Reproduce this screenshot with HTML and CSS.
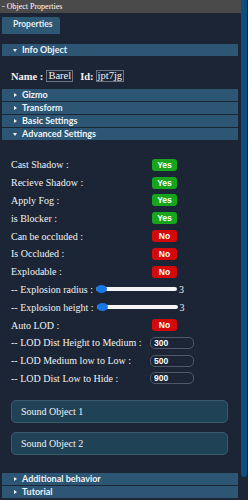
FILE: index.html
```html
<!DOCTYPE html>
<html>
<head>
  <title>Object Properties</title>
  <link rel="stylesheet" href="styles.css">
</head>
<body>

<div class="window">
  <div class="panel">
    <div class="titlebar">- Object Properties</div>
    <div class="tabs">
      <div class="tab">Properties</div>
    </div>

    <div class="sections">
      <div class="section-head open">Info Object</div>
      <div class="info">
        <b>Name :</b>
        <span class="field">Barel</span>
        <b class="id-label">Id:</b>
        <span class="field">jpt7jg</span>
      </div>

      <div class="section-head">Gizmo</div>
      <div class="section-head">Transform</div>
      <div class="section-head">Basic Settings</div>
      <div class="section-head open">Advanced Settings</div>

      <div class="advanced">
        <div class="row"><span class="label">Cast Shadow :</span><span class="badge yes">Yes</span></div>
        <div class="row"><span class="label">Recieve Shadow :</span><span class="badge yes">Yes</span></div>
        <div class="row"><span class="label">Apply Fog :</span><span class="badge yes">Yes</span></div>
        <div class="row"><span class="label">is Blocker :</span><span class="badge yes">Yes</span></div>
        <div class="row"><span class="label">Can be occluded :</span><span class="badge no">No</span></div>
        <div class="row"><span class="label">Is Occluded :</span><span class="badge no">No</span></div>
        <div class="row"><span class="label">Explodable :</span><span class="badge no">No</span></div>
        <div class="row">
          <span>-- Explosion radius :</span>
          <input class="slider" type="range" min="0" max="100" value="0">
          <span class="value">3</span>
        </div>
        <div class="row">
          <span>-- Explosion height :</span>
          <input class="slider" type="range" min="0" max="100" value="0">
          <span class="value">3</span>
        </div>
        <div class="row"><span class="label">Auto LOD :</span><span class="badge no">No</span></div>
        <div class="row"><span class="label lod">-- LOD Dist Height to Medium :</span><input class="num" type="text" value="300"></div>
        <div class="row"><span class="label lod">-- LOD Medium low to Low :</span><input class="num" type="text" value="500"></div>
        <div class="row"><span class="label lod">-- LOD Dist Low to Hide :</span><input class="num" type="text" value="900"></div>

        <div class="sound">Sound Object 1</div>
        <div class="sound">Sound Object 2</div>
      </div>

      <div class="section-head">Additional behavior</div>
      <div class="section-head">Tutorial</div>
    </div>
  </div>

  <div class="scrollbar">
    <div class="thumb"></div>
  </div>
</div>

</body>
</html>
```

FILE: styles.css
```css
body {
  margin: 0;
  background: #1b2535;
  font-family: 'Liberation Serif', serif;
  color: #f2f2f2;
  overflow: hidden;
}

.window {
  display: flex;
  width: 248px;
  height: 500px;
}

.panel {
  width: 241px;
  flex: none;
}

.titlebar {
  height: 13px;
  line-height: 13px;
  background: #4a4a4a;
  font-size: 8px;
  padding-left: 2px;
  color: #fff;
}

.tabs {
  height: 17px;
  padding-left: 2px;
  margin-bottom: 14px;
}

.tab {
  display: inline-block;
  width: 47px;
  height: 17px;
  line-height: 15px;
  padding-left: 11px;
  background: #2d5975;
  border-top-right-radius: 3px;
  font-family: Lato, sans-serif;
  font-weight: bold;
  font-size: 8.5px;
  color: #e4ecf2;
}

.sections {
  padding: 0 3px 0 2px;
}

.section-head {
  position: relative;
  height: 12px;
  line-height: 12px;
  margin-bottom: 1px;
  padding-left: 20px;
  background: #2c5673;
  font-family: Lato, sans-serif;
  font-weight: bold;
  font-size: 9px;
  color: #eef3f6;
}

/* little arrow in front of every section title */
.section-head::before {
  content: "";
  position: absolute;
  left: 12px;
  top: 4px;
  border-top: 2.5px solid transparent;
  border-bottom: 2.5px solid transparent;
  border-left: 3px solid #eef3f6;
}

.section-head.open::before {
  top: 5px;
  left: 11px;
  border-left: 2.5px solid transparent;
  border-right: 2.5px solid transparent;
  border-top: 3px solid #eef3f6;
  border-bottom: none;
}

.info {
  display: flex;
  align-items: center;
  height: 12px;
  padding: 13px 0 7px 9px;
  font-size: 10.5px;
}

.info b {
  margin-right: 3px;
}

.info .id-label {
  margin-left: 7px;
  margin-right: 2px;
}

.field {
  border: 1px solid #6b7480;
  padding: 0 1px;
  line-height: 10px;
}

.advanced {
  padding: 15px 0 18px 9px;
  font-size: 10px;
}

.row {
  display: flex;
  align-items: center;
  height: 17.8px;
}

.label {
  width: 141px;
  flex: none;
}

.label.lod {
  width: 139px;
}

.badge {
  width: 25px;
  height: 12px;
  line-height: 12px;
  border-radius: 3px;
  text-align: center;
  font-family: 'Liberation Sans', sans-serif;
  font-weight: bold;
  font-size: 8.5px;
  color: #fff;
}

.badge.yes {
  background: #17a51c;
}

.badge.no {
  background: #d40a0a;
}

.slider {
  -webkit-appearance: none;
  appearance: none;
  width: 81px;
  height: 4px;
  margin: 0 2px 0 3px;
  padding: 0;
  border-radius: 2px;
  background: #f4f4f4;
}

.slider::-webkit-slider-thumb {
  -webkit-appearance: none;
  width: 11px;
  height: 8px;
  border-radius: 50%;
  background: #1877e6;
}

.value {
  font-size: 10px;
}

.num {
  width: 36px;
  height: 10px;
  padding: 0 3px;
  margin: 0;
  border: 1px solid #4f5a66;
  border-radius: 5px;
  background: #1b2535;
  color: #fff;
  font-family: 'Liberation Sans', sans-serif;
  font-weight: bold;
  font-size: 8.5px;
}

.sound {
  width: 206px;
  height: 21px;
  line-height: 21px;
  padding-left: 9px;
  border: 1px solid #3b5a6e;
  border-radius: 5px;
  background: #1f4257;
  font-size: 10px;
}

.row + .sound {
  margin-top: 12.6px;
}

.sound + .sound {
  margin-top: 9px;
}

.scrollbar {
  flex: none;
  width: 7px;
}

.thumb {
  width: 6px;
  height: 477px;
  background: #0c4e7e;
  border-radius: 0 0 3px 3px;
}
```
